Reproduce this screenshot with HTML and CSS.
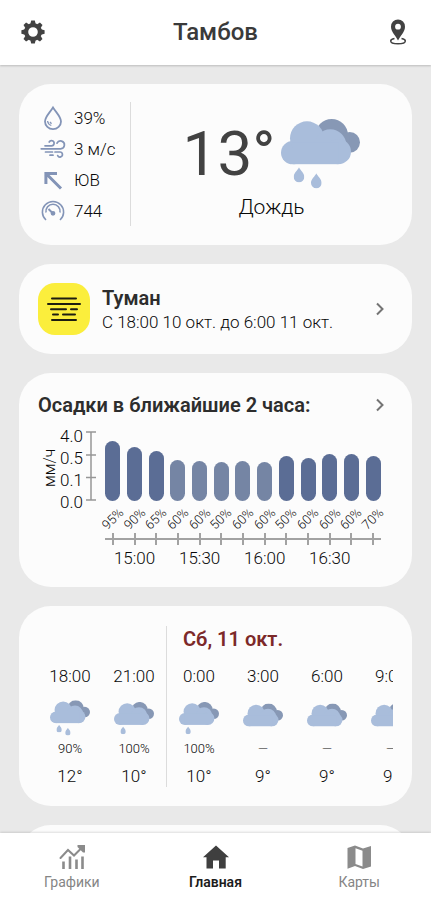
FILE: index.html
```html
<!DOCTYPE html>
<html lang="ru">
<head>
<meta charset="utf-8">
<meta name="viewport" content="width=device-width, initial-scale=1">
<title>Тамбов</title>
<link rel="stylesheet" href="styles.css">
</head>
<body>
<svg class="sprite" aria-hidden="true">
  <symbol id="cloud" viewBox="0 0 237 137">
    <g fill="#8798b5"><circle cx="152" cy="49" r="49"/><circle cx="206" cy="70" r="31"/><path d="M150 50h56v51h-56z"/></g>
    <g fill="#a9bddb"><circle cx="35" cy="101" r="35"/><circle cx="78" cy="58" r="51"/><circle cx="148" cy="79" r="48"/><circle cx="172" cy="98" r="38"/><path d="M35 70h137v66H35z"/></g>
  </symbol>
  <symbol id="drop" viewBox="0 0 32 46"><path fill="#a9bddb" d="M16 0c4 10 16 17 16 29a16 16 0 0 1-32 0C0 17 12 10 16 0z"/></symbol>
  <symbol id="rain" viewBox="0 0 237 210">
    <use href="#cloud" width="237" height="137"/>
    <use href="#drop" x="38" y="145" width="32" height="46"/>
    <use href="#drop" x="90" y="163" width="32" height="46"/>
  </symbol>
  <symbol id="light-rain" viewBox="0 0 237 210">
    <use href="#cloud" y="10" width="237" height="137"/>
    <use href="#drop" x="38" y="156" width="32" height="46"/>
  </symbol>
  <symbol id="overcast" viewBox="0 0 237 210">
    <use href="#cloud" y="19" width="237" height="137"/>
  </symbol>
  <symbol id="chevron" viewBox="0 0 10 14"><path d="M2 1.500l5.500 5.500L2 12.500" fill="none" stroke="#747474" stroke-width="2"/></symbol>
</svg>

<header class="topbar">
  <button class="icon-button" type="button" aria-label="Настройки">
    <svg width="24" height="24" viewBox="-12 -12 24 24" fill="#424242">
      <path fill-rule="evenodd" d="M0-9a9 9 0 1 0 0 18a9 9 0 1 0 0-18zM0-4.800a4.800 4.800 0 1 1 0 9.600a4.800 4.800 0 1 1 0-9.600z"/>
      <g id="teeth"><path id="tooth" d="M-2.700-8l.9-3.600h3.600l.9 3.600z"/><use href="#tooth" transform="rotate(90)"/><use href="#tooth" transform="rotate(180)"/><use href="#tooth" transform="rotate(270)"/></g>
      <use href="#teeth" transform="rotate(45)"/>
    </svg>
  </button>
  <h1 class="city">Тамбов</h1>
  <button class="icon-button" type="button" aria-label="Местоположение">
    <svg width="18" height="26" viewBox="0 0 18 26">
      <path fill="#424242" fill-rule="evenodd" d="M9 .5a7 7 0 0 0-7 7.200C2 13 7 17 9 21.500 11 17 16 13 16 7.700A7 7 0 0 0 9 .5zm0 4.300a2.900 2.900 0 1 1 0 5.800 2.900 2.900 0 0 1 0-5.800z"/>
      <path fill="none" stroke="#424242" stroke-width="1.500" d="M5.500 19.500C3 20 1.700 20.900 1.700 21.900c0 1.600 3.100 2.800 7.300 2.800s7.300-1.200 7.300-2.800c0-1-1.300-1.900-3.800-2.400"/>
    </svg>
  </button>
</header>

<main class="feed">
  <section class="card current">
    <ul class="details">
      <li><svg width="26" height="26" viewBox="0 0 26 26" fill="none" stroke="#8394b7" stroke-width="1.800"><path d="M13 2.500c3.500 5.500 8 9.500 8 14a8 7.700 0 0 1-16 0c0-4.500 4.500-8.500 8-14z"/><path stroke-width="1.300" d="M7.500 16c.4 2.200 1.800 3.800 3.800 4.500M10 17l1.500 1.700"/></svg>39%</li>
      <li><svg width="26" height="26" viewBox="0 0 26 26" fill="none" stroke="#8394b7" stroke-width="1.700" stroke-linecap="round"><path d="M5 9.800H11.500a2.600 2.600 0 1 0-2.300-3.800M17 7.200a3.900 3.900 0 1 1 3.600 5.600H1.200M5.500 16H12.500M10 19.200H13M15 16H20a2.500 2.500 0 1 1-2.300 3.600"/></svg>3 м/с</li>
      <li><svg width="26" height="26" viewBox="0 0 26 26" fill="none" stroke="#8394b7" stroke-width="3"><path d="M21 21.500L7 7.500M5.900 17V6.400H17"/></svg>ЮВ</li>
      <li><svg width="26" height="26" viewBox="0 0 26 26" fill="none" stroke="#8394b7" stroke-width="1.600"><path d="M6 22a10.600 10.600 0 1 1 14 0"/><path d="M6 14.500A7.100 7.100 0 1 1 20 14.500"/><path d="M13 15.500L8.500 11" stroke-width="2"/><circle cx="13" cy="15.300" r="1.600" fill="#8394b7"/></svg>744</li>
    </ul>
    <div class="now">
      <div class="now-main">
        <span class="now-temp">13°</span>
        <svg width="79" height="70" aria-hidden="true"><use href="#rain"/></svg>
      </div>
      <p class="now-text">Дождь</p>
    </div>
  </section>

  <a class="card alert" href="#alert">
    <svg width="52" height="52" viewBox="0 0 52 52" aria-hidden="true">
      <rect width="52" height="52" rx="17" fill="#fbee3c"/>
      <path fill="none" stroke="#1d1d10" stroke-width="2" stroke-linecap="round" d="M14 15.500H38M10 21H42M13 26.300H28M33 26.300H39M15 31.500H20M25 31.500H37M14 37H38"/>
    </svg>
    <span class="alert-body">
      <strong class="alert-title">Туман</strong>
      <span class="alert-time">С 18:00 10 окт. до 6:00 11 окт.</span>
    </span>
    <svg class="chevron" width="10" height="14" aria-hidden="true"><use href="#chevron"/></svg>
  </a>

  <section class="card rainfall">
    <a class="card-head" href="#rainfall">
      <h2 class="card-title">Осадки в ближайшие 2 часа:</h2>
      <svg class="chevron" width="10" height="14" aria-hidden="true"><use href="#chevron"/></svg>
    </a>
    <div class="chart">
      <div class="unit">мм/ч</div>
      <div class="scale"><span>4.0</span><span>0.5</span><span>0.1</span><span>0.0</span></div>
      <svg class="axis" width="10" height="70" viewBox="0 0 10 70" fill="none" stroke="#969696" stroke-width="1.500" aria-hidden="true"><path d="M5 1V69M0 1H10M0 24H10M0 46.500H10M0 69H10"/></svg>
      <div class="plot">
        <div class="bars">
          <i style="height:60px"></i><i style="height:54px"></i><i style="height:50px"></i><i class="soft" style="height:41px"></i><i class="soft" style="height:40px"></i><i class="soft" style="height:39px"></i><i class="soft" style="height:40px"></i><i class="soft" style="height:39px"></i><i style="height:45px"></i><i style="height:43px"></i><i style="height:47px"></i><i style="height:47px"></i><i style="height:45px"></i>
        </div>
        <div class="chances">
          <span>95%</span><span>90%</span><span>65%</span><span>60%</span><span>60%</span><span>50%</span><span>60%</span><span>60%</span><span>50%</span><span>60%</span><span>60%</span><span>60%</span><span>70%</span>
        </div>
        <div class="ticks"><i></i><i></i><i></i><i></i><i></i><i></i><i></i><i></i><i></i><i></i><i></i><i></i><i></i></div>
        <div class="times"><span>15:00</span><span>15:30</span><span>16:00</span><span>16:30</span></div>
      </div>
    </div>
  </section>

  <section class="card forecast">
    <div class="strip">
      <div class="day">
        <h2 class="day-title"></h2>
        <div class="hours">
          <div class="hour"><span>18:00</span><svg width="40" height="36"><use href="#rain"/></svg><small>90%</small><span>12°</span></div>
          <div class="hour"><span>21:00</span><svg width="40" height="36"><use href="#light-rain"/></svg><small>100%</small><span>10°</span></div>
        </div>
      </div>
      <div class="day">
        <h2 class="day-title">Сб, 11 окт.</h2>
        <div class="hours">
          <div class="hour"><span>0:00</span><svg width="40" height="36"><use href="#light-rain"/></svg><small>100%</small><span>10°</span></div>
          <div class="hour"><span>3:00</span><svg width="40" height="36"><use href="#overcast"/></svg><small>—</small><span>9°</span></div>
          <div class="hour"><span>6:00</span><svg width="40" height="36"><use href="#overcast"/></svg><small>—</small><span>9°</span></div>
          <div class="hour"><span>9:00</span><svg width="40" height="36"><use href="#overcast"/></svg><small>—</small><span>9°</span></div>
        </div>
      </div>
    </div>
  </section>

  <section class="card next"></section>
</main>

<nav class="tabs">
  <a class="tab" href="#charts">
    <svg width="28" height="26" viewBox="0 0 28 26" fill="none" stroke="#8b8b8b"><path stroke-width="2" stroke-linecap="round" d="M2.500 14L10 6l6 5.500L24 3.500"/><path fill="#8b8b8b" stroke="none" d="M19.500 1H27v7.500h-2L19.500 3z"/><path stroke-width="2.600" d="M5.500 17.500V25M12 12.500V25M18.500 15.500V25M24.500 12.500V25"/></svg>
    Графики
  </a>
  <a class="tab active" href="#home">
    <svg width="28" height="26" viewBox="0 0 28 26" fill="#3f3f3f"><path d="M14 1.500L27 13.200H23.700V24.500H17V16.500H11V24.500H4.500V13.200H1z"/></svg>
    Главная
  </a>
  <a class="tab" href="#maps">
    <svg width="28" height="26" viewBox="0 0 28 26" fill="#8b8b8b"><path fill-rule="evenodd" d="M2.500 4L10 1.500l8 3 8-2.500V22.500L18 25l-8-3-7.500 2.800zM10.500 4.200V20l7 2.600V6.800z"/></svg>
    Карты
  </a>
</nav>
</body>
</html>
```
FILE: styles.css
```css
* {
  box-sizing: border-box;
}

body {
  display: flex;
  flex-direction: column;
  height: 100vh;
  margin: 0;
  background: #e9e9e9;
  color: #080808;
  font: 300 17px/22px Roboto, "Noto Sans", sans-serif;
}

h1, h2, p, ul {
  margin: 0;
  padding: 0;
}

a {
  color: inherit;
  text-decoration: none;
}

svg {
  display: block;
  flex: none;
}

.sprite {
  position: absolute;
  width: 0;
  height: 0;
}

.topbar {
  display: flex;
  flex: none;
  align-items: center;
  justify-content: space-between;
  height: 65px;
  padding: 0 16px 2px;
  background: #fff;
  box-shadow: 0 1px 2px rgba(0, 0, 0, 0.2);
  z-index: 1;
}

.icon-button {
  display: flex;
  align-items: center;
  justify-content: center;
  width: 34px;
  height: 34px;
  padding: 0;
  border: 0;
  background: none;
}

.city {
  color: #3a3a3a;
  font-size: 24px;
  font-weight: 500;
  line-height: 30px;
}

.feed {
  display: flex;
  flex: 1;
  flex-direction: column;
  gap: 19px;
  min-height: 0;
  padding: 19px;
  overflow-y: auto;
  scrollbar-width: none;
}

.card {
  flex: none;
  border-radius: 32px;
  background: #fcfcfc;
}

.current {
  display: flex;
  padding: 18px 0 19px;
}

.details {
  display: flex;
  flex-direction: column;
  gap: 5px;
  width: 112px;
  padding: 3px 0 2px 21px;
  border-right: 1px solid #dcdcdc;
  list-style: none;
}

.details li {
  display: flex;
  align-items: center;
  gap: 8px;
  height: 26px;
}

.now {
  flex: 1;
  padding-top: 16px;
  text-align: center;
}

.now-main {
  display: flex;
  align-items: center;
  justify-content: center;
  gap: 6px;
  height: 72px;
}

.now-temp {
  color: #424242;
  font-size: 62px;
  font-weight: 400;
  line-height: 72px;
}

.now-text {
  padding-top: 4px;
  font-size: 21px;
  line-height: 26px;
}

.alert {
  display: flex;
  align-items: center;
  gap: 12px;
  padding: 19px;
}

.alert-body {
  display: flex;
  flex: 1;
  flex-direction: column;
}

.alert-title,
.card-title,
.day-title {
  color: #2d2d2d;
  font-size: 20px;
  font-weight: 600;
  line-height: 26px;
}

.chevron {
  margin-right: 8px;
}

.rainfall {
  padding: 19px 19px 18px;
}

.card-head {
  display: flex;
  align-items: center;
  justify-content: space-between;
}

.chart {
  display: flex;
  align-items: flex-start;
  margin-top: 7px;
  padding: 0 9px 0 2px;
}

.unit {
  width: 20px;
  height: 86px;
  font-size: 16px;
  line-height: 20px;
  text-align: center;
  writing-mode: vertical-rl;
  transform: rotate(180deg);
}

.scale {
  display: flex;
  flex-direction: column;
  width: 26px;
}

.axis {
  margin: 6px 6px 0 0;
}

.plot {
  flex: 1;
}

.bars,
.chances,
.ticks,
.times {
  display: grid;
  grid-template-columns: repeat(13, 1fr);
  justify-items: center;
}

.bars {
  align-items: end;
  height: 76px;
}

.bars i {
  width: 15px;
  border-radius: 8px;
  background: #5b6d95;
}

.bars .soft {
  background: #7585a4;
}

.chances {
  align-items: center;
  height: 32px;
  padding-top: 3px;
  font-size: 13px;
  line-height: 16px;
}

.chances span {
  display: flex;
  justify-content: center;
  width: 16px;
  transform: rotate(-45deg);
}

.ticks {
  height: 12px;
  background: linear-gradient(#a2a2a2, #a2a2a2) center / calc(100% - 6px) 2px no-repeat;
}

.ticks i {
  width: 2px;
  background: #a2a2a2;
}

.times {
  padding-top: 2px;
}

.times span {
  grid-column: span 3;
}

.forecast {
  padding: 20px 19px 19px;
}

.strip {
  display: flex;
  overflow-x: auto;
  scrollbar-width: none;
}

.day {
  flex: none;
}

.day + .day {
  border-left: 1px solid #dcdcdc;
}

.day-title {
  height: 39px;
  padding-left: 16px;
  color: #7c2929;
}

.hours {
  display: flex;
}

.hour {
  display: flex;
  flex-direction: column;
  align-items: center;
  width: 64px;
}

.hour svg {
  margin-top: 13px;
}

.hour small {
  padding: 4px 0 7px;
  font-size: 13px;
  line-height: 18px;
}

.next {
  height: 200px;
}

.tabs {
  display: flex;
  flex: none;
  height: 67px;
  padding-top: 11px;
  background: #fff;
  box-shadow: 0 -1px 2px rgba(0, 0, 0, 0.12);
  z-index: 1;
}

.tab {
  display: flex;
  flex: 1;
  flex-direction: column;
  align-items: center;
  gap: 2px;
  color: #858585;
  font-size: 14px;
  font-weight: 400;
  line-height: 20px;
}

.tab.active {
  color: #1c1c1c;
  font-weight: 600;
}
```
